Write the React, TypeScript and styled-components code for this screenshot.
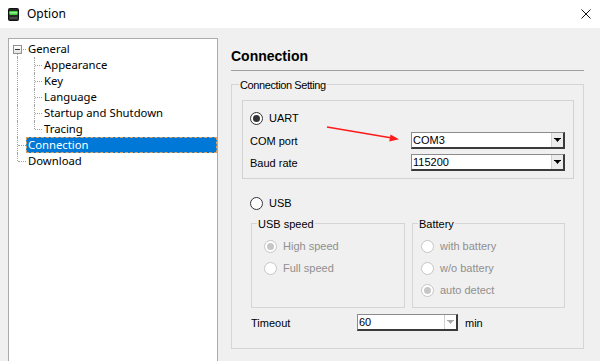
import React from "react";
import styled, { createGlobalStyle, css } from "styled-components";

const GlobalStyle = createGlobalStyle`
  html, body { margin: 0; padding: 0; }
  body {
    width: 600px; height: 361px; overflow: hidden; background: #f0f0f0;
    font-family: "Liberation Sans", Arial, sans-serif;
  }
  * { box-sizing: border-box; }
`;

const Window = styled.div`
  position: relative;
  width: 600px;
  height: 361px;
  display: flex;
  flex-direction: column;
  background: #f0f0f0;
  overflow: hidden;
`;

const TitleBar = styled.div`
  flex: none;
  height: 28px;
  background: #ffffff;
  display: flex;
  align-items: center;
  padding-left: 8px;
`;

const TitleText = styled.span`
  font-family: "Noto Sans", sans-serif;
  font-size: 12px;
  line-height: 16px;
  color: #000;
  margin-left: 8px;
`;

const CloseButton = styled.div`
  margin-left: auto;
  width: 28px;
  height: 28px;
  display: flex;
  align-items: center;
  justify-content: center;
`;

const Body = styled.div`
  flex: 1;
  min-height: 0;
  display: flex;
  align-items: flex-start;
  padding: 10px 0 0 8px;
`;

/* ---------- tree ---------- */

const TreePanel = styled.div`
  flex: none;
  width: 210px;
  height: 340px;
  background: #ffffff;
  border: 1px solid #ababab;
  padding-top: 2px;
  font-family: "Noto Sans", sans-serif;
  font-size: 11.3px;
  color: #000;
`;

const TreeRow = styled.div`
  display: flex;
  height: 16px;
`;

type VKind = "full" | "down" | "up" | "none";

const Guide = styled.div<{ $w: number; $v: VKind; $h: boolean }>`
  position: relative;
  flex: none;
  width: ${(p) => p.$w}px;
  height: 16px;
  &::before {
    content: "";
    position: absolute;
    left: 8px;
    width: 0;
    border-left: 1px dotted #a0a0a0;
    display: ${(p) => (p.$v === "none" ? "none" : "block")};
    top: ${(p) => (p.$v === "down" ? "8px" : "0")};
    bottom: ${(p) => (p.$v === "up" ? "8px" : "0")};
  }
  &::after {
    content: "";
    position: absolute;
    left: 9px;
    right: 0;
    top: 8px;
    height: 0;
    border-top: 1px dotted #a0a0a0;
    display: ${(p) => (p.$h ? "block" : "none")};
  }
`;

const Expander = styled.span`
  position: absolute;
  z-index: 1;
  left: 4px;
  top: 4px;
  width: 9px;
  height: 9px;
  border: 1px solid #919191;
  background: linear-gradient(#ffffff, #e2e2e2);
  &::after {
    content: "";
    position: absolute;
    left: 1px;
    top: 3px;
    width: 5px;
    height: 1px;
    background: #333;
  }
`;

const TreeLabel = styled.div<{ $selected?: boolean }>`
  flex: 1;
  height: 16px;
  line-height: 16px;
  padding-left: 2px;
  white-space: nowrap;
  ${(p) =>
    p.$selected &&
    css`
      background: #0078d7;
      color: #ffffff;
      outline: 1px dashed #d9a066;
      outline-offset: -1px;
    `}
`;

/* ---------- right side ---------- */

const RightPanel = styled.div`
  flex: none;
  margin-left: 13px;
  width: 353px;
  display: flex;
  flex-direction: column;
  font-size: 11px;
  color: #000;
`;

const Heading = styled.div`
  margin-top: 9px;
  font-size: 14px;
  font-weight: bold;
  line-height: 18px;
`;

const Separator = styled.div`
  margin-top: 5px;
  height: 1px;
  background: #a0a0a0;
`;

const GroupBox = styled.div<{ $w?: number }>`
  position: relative;
  border: 1px solid #d5d5d5;
  ${(p) => p.$w && `width: ${p.$w}px; flex: none;`}
`;

const OuterGroup = styled(GroupBox)`
  margin-top: 13px;
  padding: 15px 9px 17px 10px;
`;

const SubGroup = styled(GroupBox)<{ $pl: number }>`
  height: 85px;
  padding: 14px 0 0 ${(p) => p.$pl}px;
  display: flex;
  flex-direction: column;
  gap: 6px;
`;

const Legend = styled.span<{ $left: number; $tight?: boolean }>`
  position: absolute;
  top: -8px;
  left: ${(p) => p.$left}px;
  padding: 0 1px;
  background: #f0f0f0;
  line-height: 16px;
  color: #000;
  letter-spacing: ${(p) => (p.$tight ? "-0.4px" : "0")};
`;

const InsetBox = styled.div`
  border: 1px solid #d3d3d3;
  padding: 9px 8px 7px 7px;
`;

const RadioRow = styled.div<{ $disabled?: boolean; $pl?: number; $mt?: number }>`
  display: flex;
  align-items: center;
  height: 16px;
  gap: 6px;
  padding-left: ${(p) => p.$pl ?? 0}px;
  margin-top: ${(p) => p.$mt ?? 0}px;
  color: ${(p) => (p.$disabled ? "#8f8f8f" : "#000")};
`;

const Radio = styled.span<{ $checked?: boolean; $disabled?: boolean }>`
  position: relative;
  flex: none;
  width: 13px;
  height: 13px;
  border-radius: 50%;
  background: #ffffff;
  border: 1px solid ${(p) => (p.$disabled ? "#c6c6c6" : "#333333")};
  &::after {
    content: "";
    position: absolute;
    left: 2px;
    top: 2px;
    width: 7px;
    height: 7px;
    border-radius: 50%;
    background: ${(p) => (p.$disabled ? "#c6c6c6" : "#333333")};
    display: ${(p) => (p.$checked ? "block" : "none")};
  }
`;

const FieldRow = styled.div<{ $label: number; $mt: number; $pl?: number }>`
  display: grid;
  grid-template-columns: ${(p) => p.$label}px auto 1fr;
  align-items: center;
  height: 17px;
  margin-top: ${(p) => p.$mt}px;
  padding-left: ${(p) => p.$pl ?? 0}px;
`;

const Combo = styled.div<{ $w: number }>`
  width: ${(p) => p.$w}px;
  height: 17px;
  display: flex;
  align-items: stretch;
  background: #ffffff;
  border-style: solid;
  border-width: 1px 2px 2px 1px;
  border-color: #8c8c8c #3a3a3a #3a3a3a #8c8c8c;
`;

const ComboText = styled.span`
  flex: 1;
  padding-left: 1px;
  line-height: 14px;
  white-space: nowrap;
`;

const ComboButton = styled.span<{ $muted?: boolean }>`
  flex: none;
  width: 12px;
  display: flex;
  align-items: center;
  justify-content: center;
  background: ${(p) => (p.$muted ? "#ffffff" : "#ececec")};
  border-left: 1px solid #d0d0d0;
`;

const SubGroups = styled.div`
  display: flex;
  gap: 7px;
  margin-top: 12px;
  padding-left: 9px;
`;

const Unit = styled.span`
  padding-left: 7px;
`;

const ArrowOverlay = styled.svg`
  position: absolute;
  left: 0;
  top: 0;
  pointer-events: none;
`;

/* ---------- pieces ---------- */

const AppIcon = () => (
  <svg width="11" height="13" viewBox="0 0 11 13">
    <rect x="0.5" y="0.5" width="10" height="12" rx="1" fill="#262626" stroke="#111" />
    <rect x="1.5" y="3" width="8" height="4" fill="#3fcc3f" />
    <rect x="1.5" y="4" width="8" height="1.5" fill="#8ff08f" />
    <rect x="1.5" y="9.5" width="8" height="1" fill="#6b6b6b" />
  </svg>
);

const CloseIcon = () => (
  <svg width="10" height="10" viewBox="0 0 10 10">
    <path d="M0.5 0.5 L9.5 9.5 M9.5 0.5 L0.5 9.5" stroke="#111" strokeWidth="1" fill="none" />
  </svg>
);

const DropArrow = ({ muted }: { muted?: boolean }) => (
  <svg width="7" height="5" viewBox="0 0 7 5">
    <path d="M0 0 H7 V1 H0 Z M1 1 H6 L3.5 4 Z" fill={muted ? "#a8a8a8" : "#000"} />
  </svg>
);

const ComboBox = ({ value, w, muted }: { value: string; w: number; muted?: boolean }) => (
  <Combo $w={w}>
    <ComboText>{value}</ComboText>
    <ComboButton $muted={muted}>
      <DropArrow muted={muted} />
    </ComboButton>
  </Combo>
);

type Node = {
  label: string;
  root: VKind;
  rootH: boolean;
  child?: VKind;
  expander?: boolean;
  selected?: boolean;
};

const nodes: Node[] = [
  { label: "General", root: "down", rootH: true, expander: true },
  { label: "Appearance", root: "full", rootH: false, child: "full" },
  { label: "Key", root: "full", rootH: false, child: "full" },
  { label: "Language", root: "full", rootH: false, child: "full" },
  { label: "Startup and Shutdown", root: "full", rootH: false, child: "full" },
  { label: "Tracing", root: "full", rootH: false, child: "up" },
  { label: "Connection", root: "full", rootH: true, selected: true },
  { label: "Download", root: "up", rootH: true },
];

export default function App() {
  return (
    <Window>
      <GlobalStyle />
      <TitleBar>
        <AppIcon />
        <TitleText>Option</TitleText>
        <CloseButton>
          <CloseIcon />
        </CloseButton>
      </TitleBar>
      <Body>
        <TreePanel>
          {nodes.map((n) => (
            <TreeRow key={n.label}>
              <Guide $w={17} $v={n.root} $h={n.rootH}>
                {n.expander && <Expander />}
              </Guide>
              {n.child && <Guide $w={16} $v={n.child} $h />}
              <TreeLabel $selected={n.selected}>{n.label}</TreeLabel>
            </TreeRow>
          ))}
        </TreePanel>

        <RightPanel>
          <Heading>Connection</Heading>
          <Separator />
          <OuterGroup>
            <Legend $left={7} $tight>Connection Setting</Legend>
            <InsetBox>
              <RadioRow>
                <Radio $checked />
                <span>UART</span>
              </RadioRow>
              <FieldRow $label={161} $mt={6}>
                <span>COM port</span>
                <ComboBox value="COM3" w={154} />
              </FieldRow>
              <FieldRow $label={161} $mt={5}>
                <span>Baud rate</span>
                <ComboBox value="115200" w={154} />
              </FieldRow>
            </InsetBox>

            <RadioRow $pl={8} $mt={16}>
              <Radio />
              <span>USB</span>
            </RadioRow>

            <SubGroups>
              <SubGroup $w={154} $pl={12}>
                <Legend $left={5}>USB speed</Legend>
                <RadioRow $disabled>
                  <Radio $checked $disabled />
                  <span>High speed</span>
                </RadioRow>
                <RadioRow $disabled>
                  <Radio $disabled />
                  <span>Full speed</span>
                </RadioRow>
              </SubGroup>
              <SubGroup $w={153} $pl={8}>
                <Legend $left={5}>Battery</Legend>
                <RadioRow $disabled>
                  <Radio $disabled />
                  <span>with battery</span>
                </RadioRow>
                <RadioRow $disabled>
                  <Radio $disabled />
                  <span>w/o battery</span>
                </RadioRow>
                <RadioRow $disabled>
                  <Radio $checked $disabled />
                  <span>auto detect</span>
                </RadioRow>
              </SubGroup>
            </SubGroups>

            <FieldRow $label={106} $mt={6} $pl={9}>
              <span>Timeout</span>
              <ComboBox value="60" w={101} muted />
              <Unit>min</Unit>
            </FieldRow>
          </OuterGroup>
        </RightPanel>
      </Body>

      <ArrowOverlay width="600" height="361" viewBox="0 0 600 361">
        <line x1="327" y1="127" x2="392" y2="138" stroke="#ff1a1a" strokeWidth="1.5" />
        <polygon points="399,139.2 390.5,134.6 389.3,141.6" fill="#ff1a1a" />
      </ArrowOverlay>
    </Window>
  );
}
